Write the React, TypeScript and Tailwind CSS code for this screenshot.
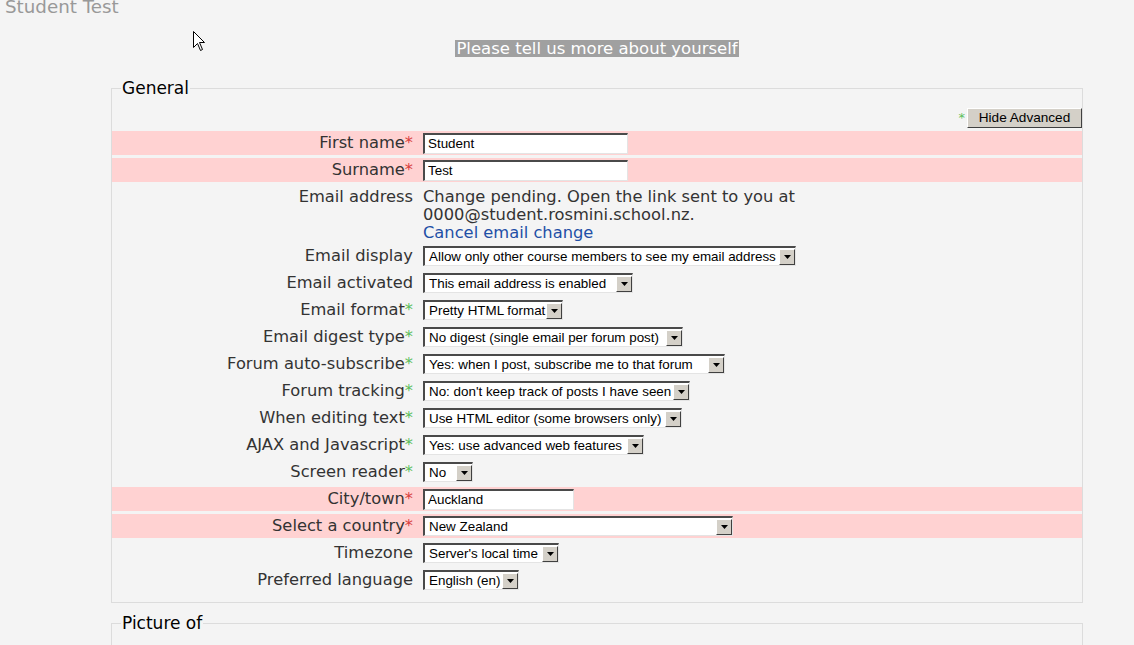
import React from "react";

type Req = "red" | "green" | undefined;

function Star({ req }: { req: Req }) {
  if (!req) return null;
  return (
    <span className={req === "red" ? "text-[#d94040]" : "text-[#5cbf5c]"}>*</span>
  );
}

function Row({
  label,
  req,
  pink,
  children,
}: {
  label: string;
  req?: Req;
  pink?: boolean;
  children: React.ReactNode;
}) {
  return (
    <div className={`flex items-center h-[24px] mt-[3px] ${pink ? "bg-[#ffd2d2]" : ""}`}>
      <div className="w-[301px] shrink-0 text-right text-[16.3px] leading-[18px] text-[#333]">
        {label}
        <Star req={req} />
      </div>
      <div className="ml-[10px] flex items-center">{children}</div>
    </div>
  );
}

function Select({ value, w }: { value: string; w: string }) {
  return (
    <div
      className={`flex items-center h-[20px] bg-white border-t-2 border-l-2 border-b border-r border-t-[#4a4a4a] border-l-[#4a4a4a] border-b-[#e4e4e4] border-r-[#e4e4e4] ${w}`}
    >
      <span className="flex-1 pl-[4px] whitespace-nowrap overflow-hidden text-[13.4px] leading-[16px] text-black font-['Liberation_Sans',Arial,sans-serif]">
        {value}
      </span>
      <span className="w-[16px] h-[16px] shrink-0 flex items-center justify-center bg-[#d4d0c8] border border-t-white border-l-white border-b-[#404040] border-r-[#404040]">
        <svg width="7" height="4" viewBox="0 0 7 4">
          <path d="M0 0h7L3.5 4z" fill="#000" />
        </svg>
      </span>
    </div>
  );
}

function TextBox({ value, w }: { value: string; w: string }) {
  return (
    <input
      readOnly
      value={value}
      className={`h-[21px] bg-white pl-[3px] outline-none border-t-2 border-l-2 border-b border-r border-t-[#4a4a4a] border-l-[#4a4a4a] border-b-[#e4e4e4] border-r-[#e4e4e4] text-[13.4px] text-black font-['Liberation_Sans',Arial,sans-serif] ${w}`}
    />
  );
}

export default function App() {
  return (
    <div className="relative h-[645px] overflow-hidden bg-[#f4f4f4] font-['DejaVu_Sans',Verdana,sans-serif] text-[#222]">
      <div className="h-[16px] pl-[5px] text-[18.3px] leading-[18px] -mt-[2px] text-[#999]">Student Test</div>

      <div className="mt-[26px] ml-[111px] w-[972px] text-center leading-[17px] h-[17px]">
        <span className="inline-block h-[17px] px-[1px] bg-[#a0a0a0] text-white text-[16.5px] leading-[17px] align-top">
          Please tell us more about yourself
        </span>
      </div>

      <fieldset className="mt-[21px] ml-[111px] w-[972px] border border-[#dcdcdc] pb-[10px]">
        <legend className="ml-[9px] px-[1px] text-[17px] leading-[20px] text-black">General</legend>

        <div className="mt-[10px] mb-[0px] flex justify-end items-center">
          <span className="mr-[2px] text-[13px] text-[#5cbf5c]">*</span>
          <button className="h-[20px] w-[115px] bg-[#d4d0c8] border border-t-white border-l-white border-b-[#404040] border-r-[#404040] text-[13.6px] leading-[16px] text-black font-['Liberation_Sans',Arial,sans-serif]">
            Hide Advanced
          </button>
        </div>

        <Row label="First name" req="red" pink>
          <TextBox value="Student" w="w-[205px]" />
        </Row>
        <Row label="Surname" req="red" pink>
          <TextBox value="Test" w="w-[205px]" />
        </Row>

        <div className="flex items-start h-[56px] mt-[3px] pt-[3px]">
          <div className="w-[301px] shrink-0 text-right text-[16.3px] leading-[18px] text-[#333]">
            Email address
          </div>
          <div className="ml-[10px] text-[16.3px] leading-[18px] text-[#333]">
            Change pending. Open the link sent to you at
            <br />
            0000@student.rosmini.school.nz.
            <br />
            <a className="text-[#1f4fa6]" href="#">
              Cancel email change
            </a>
          </div>
        </div>

        <Row label="Email display">
          <Select value="Allow only other course members to see my email address" w="w-[373px]" />
        </Row>
        <Row label="Email activated">
          <Select value="This email address is enabled" w="w-[210px]" />
        </Row>
        <Row label="Email format" req="green">
          <Select value="Pretty HTML format" w="w-[140px]" />
        </Row>
        <Row label="Email digest type" req="green">
          <Select value="No digest (single email per forum post)" w="w-[260px]" />
        </Row>
        <Row label="Forum auto-subscribe" req="green">
          <Select value="Yes: when I post, subscribe me to that forum" w="w-[302px]" />
        </Row>
        <Row label="Forum tracking" req="green">
          <Select value="No: don't keep track of posts I have seen" w="w-[267px]" />
        </Row>
        <Row label="When editing text" req="green">
          <Select value="Use HTML editor (some browsers only)" w="w-[259px]" />
        </Row>
        <Row label="AJAX and Javascript" req="green">
          <Select value="Yes: use advanced web features" w="w-[221px]" />
        </Row>
        <Row label="Screen reader" req="green">
          <Select value="No" w="w-[50px]" />
        </Row>
        <Row label="City/town" req="red" pink>
          <TextBox value="Auckland" w="w-[151px]" />
        </Row>
        <Row label="Select a country" req="red" pink>
          <Select value="New Zealand" w="w-[310px]" />
        </Row>
        <Row label="Timezone">
          <Select value="Server's local time" w="w-[136px]" />
        </Row>
        <Row label="Preferred language">
          <Select value="English (en)" w="w-[96px]" />
        </Row>
      </fieldset>

      <fieldset className="mt-[10px] ml-[111px] w-[972px] h-[120px] border border-[#dcdcdc]">
        <legend className="ml-[9px] px-[1px] text-[17px] leading-[20px] text-black">Picture of</legend>
      </fieldset>

      {/* mouse pointer */}
      <svg className="absolute left-[193px] top-[31px]" width="13" height="21" viewBox="0 0 13 21">
        <path d="M0.5 0.5V16.5L4.5 12.5L7.5 19.5L9.5 18.5L6.5 11.5H11.5Z" fill="#fff" stroke="#000" strokeWidth="1" />
      </svg>
    </div>
  );
}
